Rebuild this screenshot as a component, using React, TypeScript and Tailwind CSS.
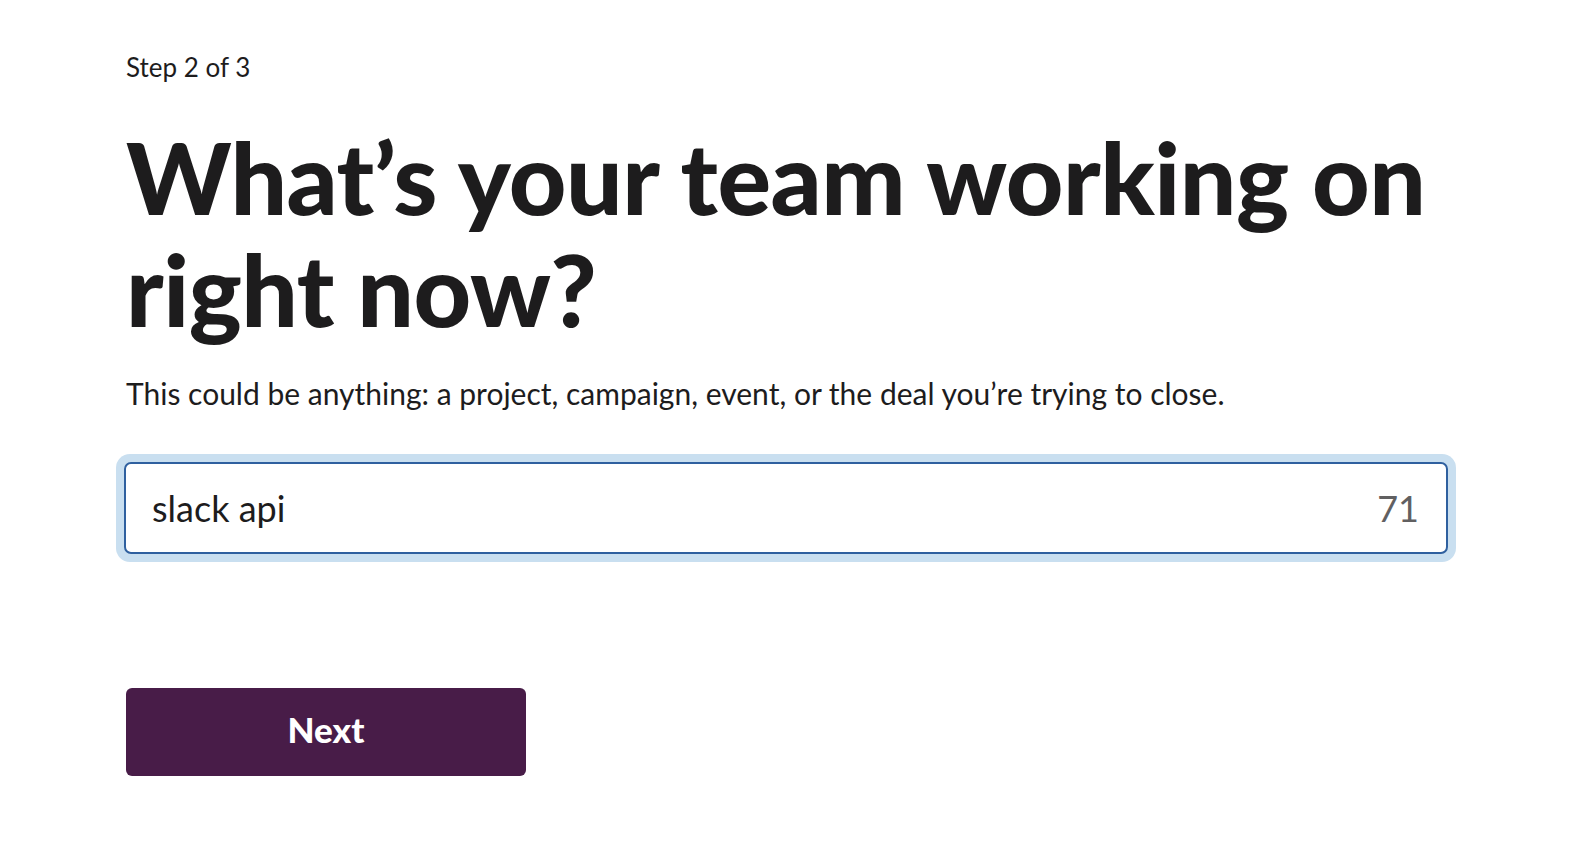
export default function App() {
  return (
    <div
      className="min-h-screen bg-white text-[#1d1c1d]"
      style={{ fontFamily: "Lato, 'Liberation Sans', sans-serif" }}
    >
      <div className="pl-[124px] pt-[49px] w-[1448px]">
        <div className="ml-[2px]">
          <div className="text-[26px] leading-[36px]">Step 2 of 3</div>

          <h1 className="mt-[35px] text-[100px] leading-[112px] font-black tracking-[-0.5px]">
            What’s your team working on right now?
          </h1>

          <p className="mt-[31px] text-[30px] leading-[36px]">
            This could be anything: a project, campaign, event, or the deal you’re trying to close.
          </p>
        </div>

        {/* Input with focus ring */}
        <div className="mt-[43px] rounded-[14px] -mx-[8px] p-[8px] bg-[#c9dff0]">
          <div className="flex items-center justify-between h-[92px] rounded-[7px] border-2 border-[#2f609f] bg-white pl-[26px] pr-[27px]">
            <span className="text-[36px]">slack api</span>
            <span className="text-[36px] text-[#616061]">71</span>
          </div>
        </div>

        <button className="mt-[126px] ml-[2px] w-[400px] h-[88px] pb-[6px] rounded-[6px] bg-[#481c48] text-white text-[35px] font-black">
          Next
        </button>
      </div>
    </div>
  );
}
